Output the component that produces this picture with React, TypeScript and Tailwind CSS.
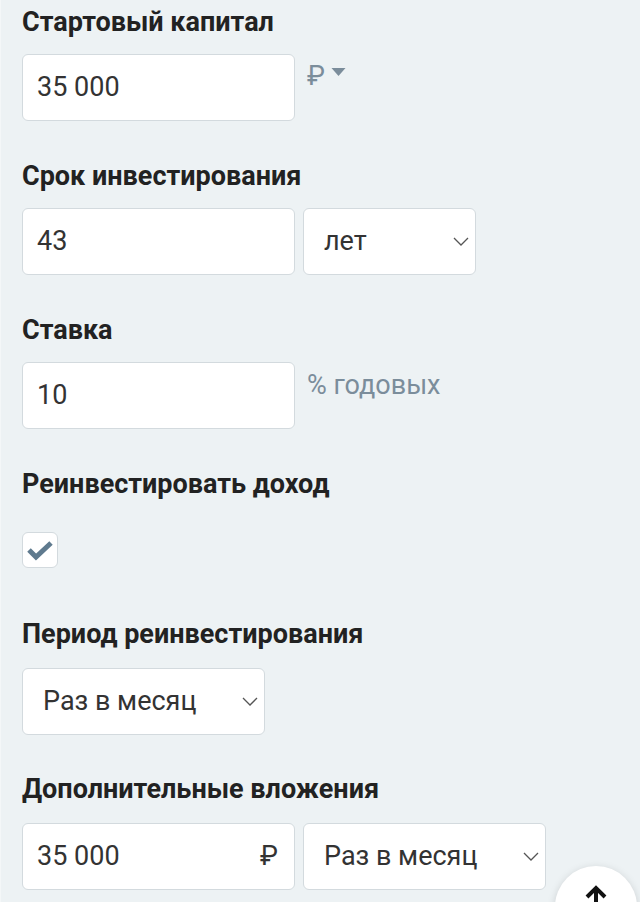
const font = { fontFamily: "Roboto, 'Noto Sans', sans-serif" };

function Label({ children }: { children: React.ReactNode }) {
    return (
        <div className="h-8 flex items-center text-[27px] font-bold text-[#222] leading-8 whitespace-nowrap">
            {children}
        </div>
    );
}

function Box({ width, children }: { width: string; children: React.ReactNode }) {
    return (
        <div
            className={`${width} h-[67px] bg-white border border-[#d3dade] rounded-[6px] flex items-center text-[27px] text-[#333]`}
        >
            {children}
        </div>
    );
}

function Select({ width, value }: { width: string; value: string }) {
    return (
        <Box width={width}>
            <span className="pl-[20px] flex-1">{value}</span>
            <svg width="16" height="9" viewBox="0 0 16 9" className="mr-[6px]">
                <path d="M1 1 L8 8 L15 1" stroke="#555" strokeWidth="1.3" fill="none" />
            </svg>
        </Box>
    );
}

export default function App() {
    return (
        <div className="w-[640px] h-[902px] overflow-hidden bg-[#edf2f4] relative border-l border-[#f4f7f8]" style={font}>
            <div className="pl-[21px] pt-[6px] flex flex-col">
                <Label>Стартовый капитал</Label>
                <div className="mt-4 flex gap-3">
                    <Box width="w-[273px]">
                        <span className="pl-[14px]">35 000</span>
                    </Box>
                    <div className="flex items-start pt-[2px] gap-[6px] text-[#7b8d9b] text-[27px]">
                        <span>₽</span>
                        <svg width="15" height="10" viewBox="0 0 15 10" className="mt-[11px]">
                            <path d="M0.5 1 L14.5 1 L7.5 9 Z" fill="#7b8d9b" />
                        </svg>
                    </div>
                </div>

                <div className="mt-[39px]">
                    <Label>Срок инвестирования</Label>
                </div>
                <div className="mt-4 flex gap-[8px]">
                    <Box width="w-[273px]">
                        <span className="pl-[14px]">43</span>
                    </Box>
                    <Select width="w-[173px]" value="лет" />
                </div>

                <div className="mt-[39px]">
                    <Label>Ставка</Label>
                </div>
                <div className="mt-4 flex gap-3">
                    <Box width="w-[273px]">
                        <span className="pl-[14px]">10</span>
                    </Box>
                    <div className="pt-[3px] text-[#7b8d9b] text-[27px]">% годовых</div>
                </div>

                <div className="mt-[39px]">
                    <Label>Реинвестировать доход</Label>
                </div>
                <div className="mt-4 h-[67px] flex items-center">
                    <div className="w-[36px] h-[36px] bg-white border border-[#d3dade] rounded-[6px] flex items-center justify-center">
                        <svg width="28" height="22" viewBox="0 0 28 22">
                            <path d="M3 11 L10 18 L25 4" stroke="#5f7a8e" strokeWidth="5" fill="none" />
                        </svg>
                    </div>
                </div>

                <div className="mt-[35px]">
                    <Label>Период реинвестирования</Label>
                </div>
                <div className="mt-[18px] flex">
                    <Select width="w-[243px]" value="Раз в месяц" />
                </div>

                <div className="mt-[38px]">
                    <Label>Дополнительные вложения</Label>
                </div>
                <div className="mt-[18px] flex gap-[8px]">
                    <Box width="w-[273px]">
                        <span className="pl-[14px] flex-1">35 000</span>
                        <span className="pr-[16px]">₽</span>
                    </Box>
                    <Select width="w-[243px]" value="Раз в месяц" />
                </div>
            </div>

            <div className="absolute left-[554px] top-[866px] w-[82px] h-[82px] rounded-full bg-white shadow-[0_2px_8px_rgba(0,0,0,0.15)] flex justify-center">
                <svg width="28" height="28" viewBox="0 0 28 28" className="mt-[18px]">
                    <path d="M14 4 L14 28 M5 13 L14 4 L23 13" stroke="#111" strokeWidth="4" fill="none" />
                </svg>
            </div>
        </div>
    );
}
